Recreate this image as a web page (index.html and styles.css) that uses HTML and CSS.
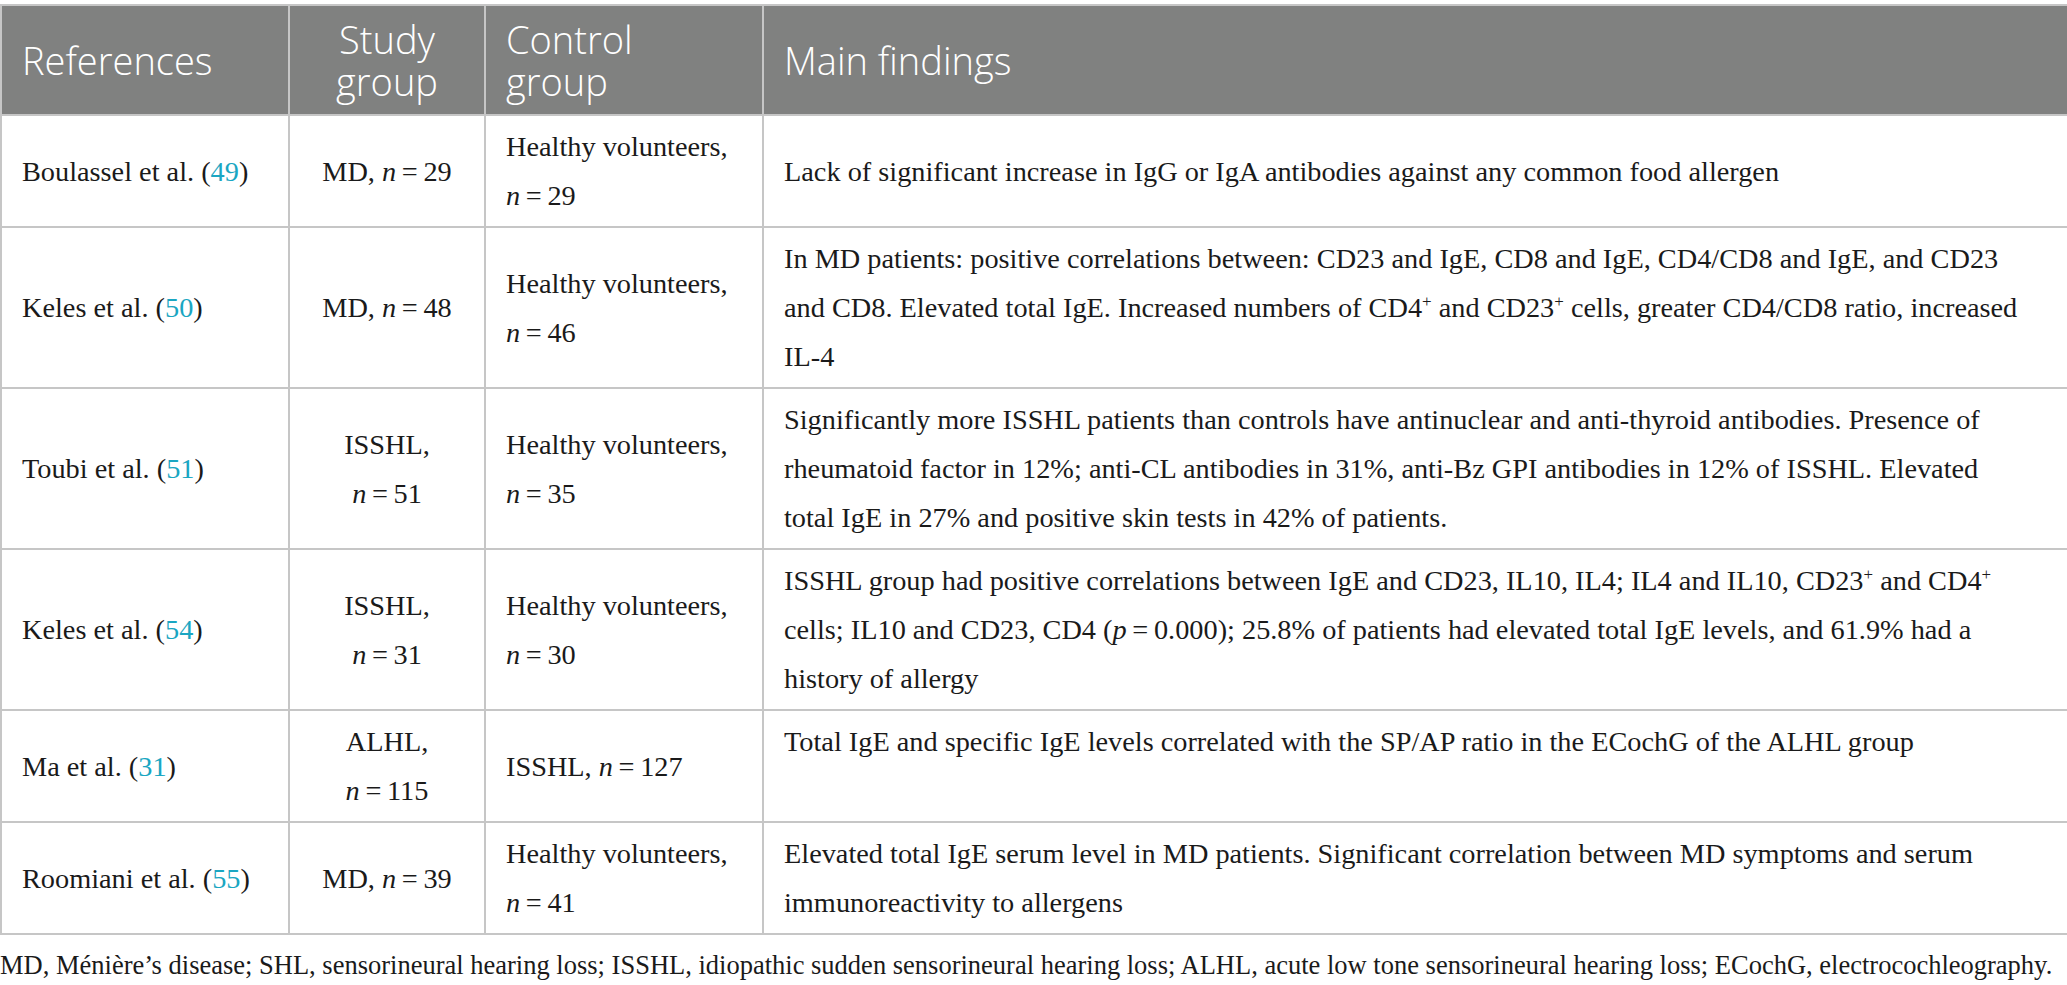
FILE: index.html
```html
<!DOCTYPE html>
<html lang="en">
<head>
<meta charset="utf-8">
<title>Table</title>
<link rel="stylesheet" href="styles.css">
</head>
<body>
<div class="wrap">
<table class="data">
  <colgroup>
    <col class="c-ref">
    <col class="c-study">
    <col class="c-control">
    <col class="c-main">
  </colgroup>
  <thead>
    <tr>
      <th class="left">References</th>
      <th class="center">Study group</th>
      <th class="left narrow">Control group</th>
      <th class="left">Main findings</th>
    </tr>
  </thead>
  <tbody>
    <tr>
      <td>Boulassel et al. (<a class="ref">49</a>)</td>
      <td class="center">MD, <i>n</i>&#8201;=&#8201;29</td>
      <td>Healthy volunteers,<br><i>n</i>&#8201;=&#8201;29</td>
      <td>Lack of significant increase in IgG or IgA antibodies against any common food allergen</td>
    </tr>
    <tr>
      <td>Keles et al. (<a class="ref">50</a>)</td>
      <td class="center">MD, <i>n</i>&#8201;=&#8201;48</td>
      <td>Healthy volunteers,<br><i>n</i>&#8201;=&#8201;46</td>
      <td>In MD patients: positive correlations between: CD23 and IgE, CD8 and IgE, CD4/CD8 and IgE, and CD23<br>and CD8. Elevated total IgE. Increased numbers of CD4<sup>+</sup> and CD23<sup>+</sup> cells, greater CD4/CD8 ratio, increased<br>IL-4</td>
    </tr>
    <tr>
      <td>Toubi et al. (<a class="ref">51</a>)</td>
      <td class="center">ISSHL,<br><i>n</i>&#8201;=&#8201;51</td>
      <td>Healthy volunteers,<br><i>n</i>&#8201;=&#8201;35</td>
      <td>Significantly more ISSHL patients than controls have antinuclear and anti-thyroid antibodies. Presence of<br>rheumatoid factor in 12%; anti-CL antibodies in 31%, anti-Bz GPI antibodies in 12% of ISSHL. Elevated<br>total IgE in 27% and positive skin tests in 42% of patients.</td>
    </tr>
    <tr>
      <td>Keles et al. (<a class="ref">54</a>)</td>
      <td class="center">ISSHL,<br><i>n</i>&#8201;=&#8201;31</td>
      <td>Healthy volunteers,<br><i>n</i>&#8201;=&#8201;30</td>
      <td>ISSHL group had positive correlations between IgE and CD23, IL10, IL4; IL4 and IL10, CD23<sup>+</sup> and CD4<sup>+</sup><br>cells; IL10 and CD23, CD4 (<i>p</i>&#8201;=&#8201;0.000); 25.8% of patients had elevated total IgE levels, and 61.9% had a<br>history of allergy</td>
    </tr>
    <tr>
      <td>Ma et al. (<a class="ref">31</a>)</td>
      <td class="center">ALHL,<br><i>n</i>&#8201;=&#8201;115</td>
      <td>ISSHL, <i>n</i>&#8201;=&#8201;127</td>
      <td class="top">Total IgE and specific IgE levels correlated with the SP/AP ratio in the ECochG of the ALHL group</td>
    </tr>
    <tr>
      <td>Roomiani et al. (<a class="ref">55</a>)</td>
      <td class="center">MD, <i>n</i>&#8201;=&#8201;39</td>
      <td>Healthy volunteers,<br><i>n</i>&#8201;=&#8201;41</td>
      <td>Elevated total IgE serum level in MD patients. Significant correlation between MD symptoms and serum<br>immunoreactivity to allergens</td>
    </tr>
  </tbody>
</table>
<p class="note">MD, Ménière’s disease; SHL, sensorineural hearing loss; ISSHL, idiopathic sudden sensorineural hearing loss; ALHL, acute low tone sensorineural hearing loss; ECochG, electrocochleography.</p>
</div>
</body>
</html>
```

FILE: styles.css
```css
html, body {
  margin: 0;
  padding: 0;
  background: #ffffff;
}

.wrap {
  padding-top: 4px;
  width: 2067px;
}

.data {
  border-collapse: collapse;
  table-layout: fixed;
  width: 2067px;
  font-family: "Liberation Serif", "Times New Roman", serif;
  font-size: 28.3px;
  color: #1a1a1a;
}

.c-ref { width: 288px; }
.c-study { width: 196px; }
.c-control { width: 278px; }
.c-main { width: 1305px; }

.data th,
.data td {
  border: 2px solid #c6c6c6;
}

.data th {
  background: #808180;
  color: #ffffff;
  font-family: "Open Sans", "Noto Sans", sans-serif;
  font-weight: 300;
  font-size: 38px;
  line-height: 42px;
  padding: 12px 20px;
  vertical-align: middle;
}

.data th.narrow {
  padding-right: 40px;
}

.data td {
  padding: 6px 20px;
  line-height: 49px;
  vertical-align: middle;
  text-align: left;
}

.left { text-align: left; }
.data .center { text-align: center; }
.data .top { vertical-align: top; }

.ref {
  color: #1aa6c2;
  text-decoration: none;
}

sup {
  font-size: 60%;
  line-height: 0;
  vertical-align: 0.6em;
}

.note {
  margin: 0;
  padding-top: 6px;
  font-family: "Liberation Serif", "Times New Roman", serif;
  font-size: 26.5px;
  line-height: 49px;
  color: #1a1a1a;
  white-space: nowrap;
}
```
